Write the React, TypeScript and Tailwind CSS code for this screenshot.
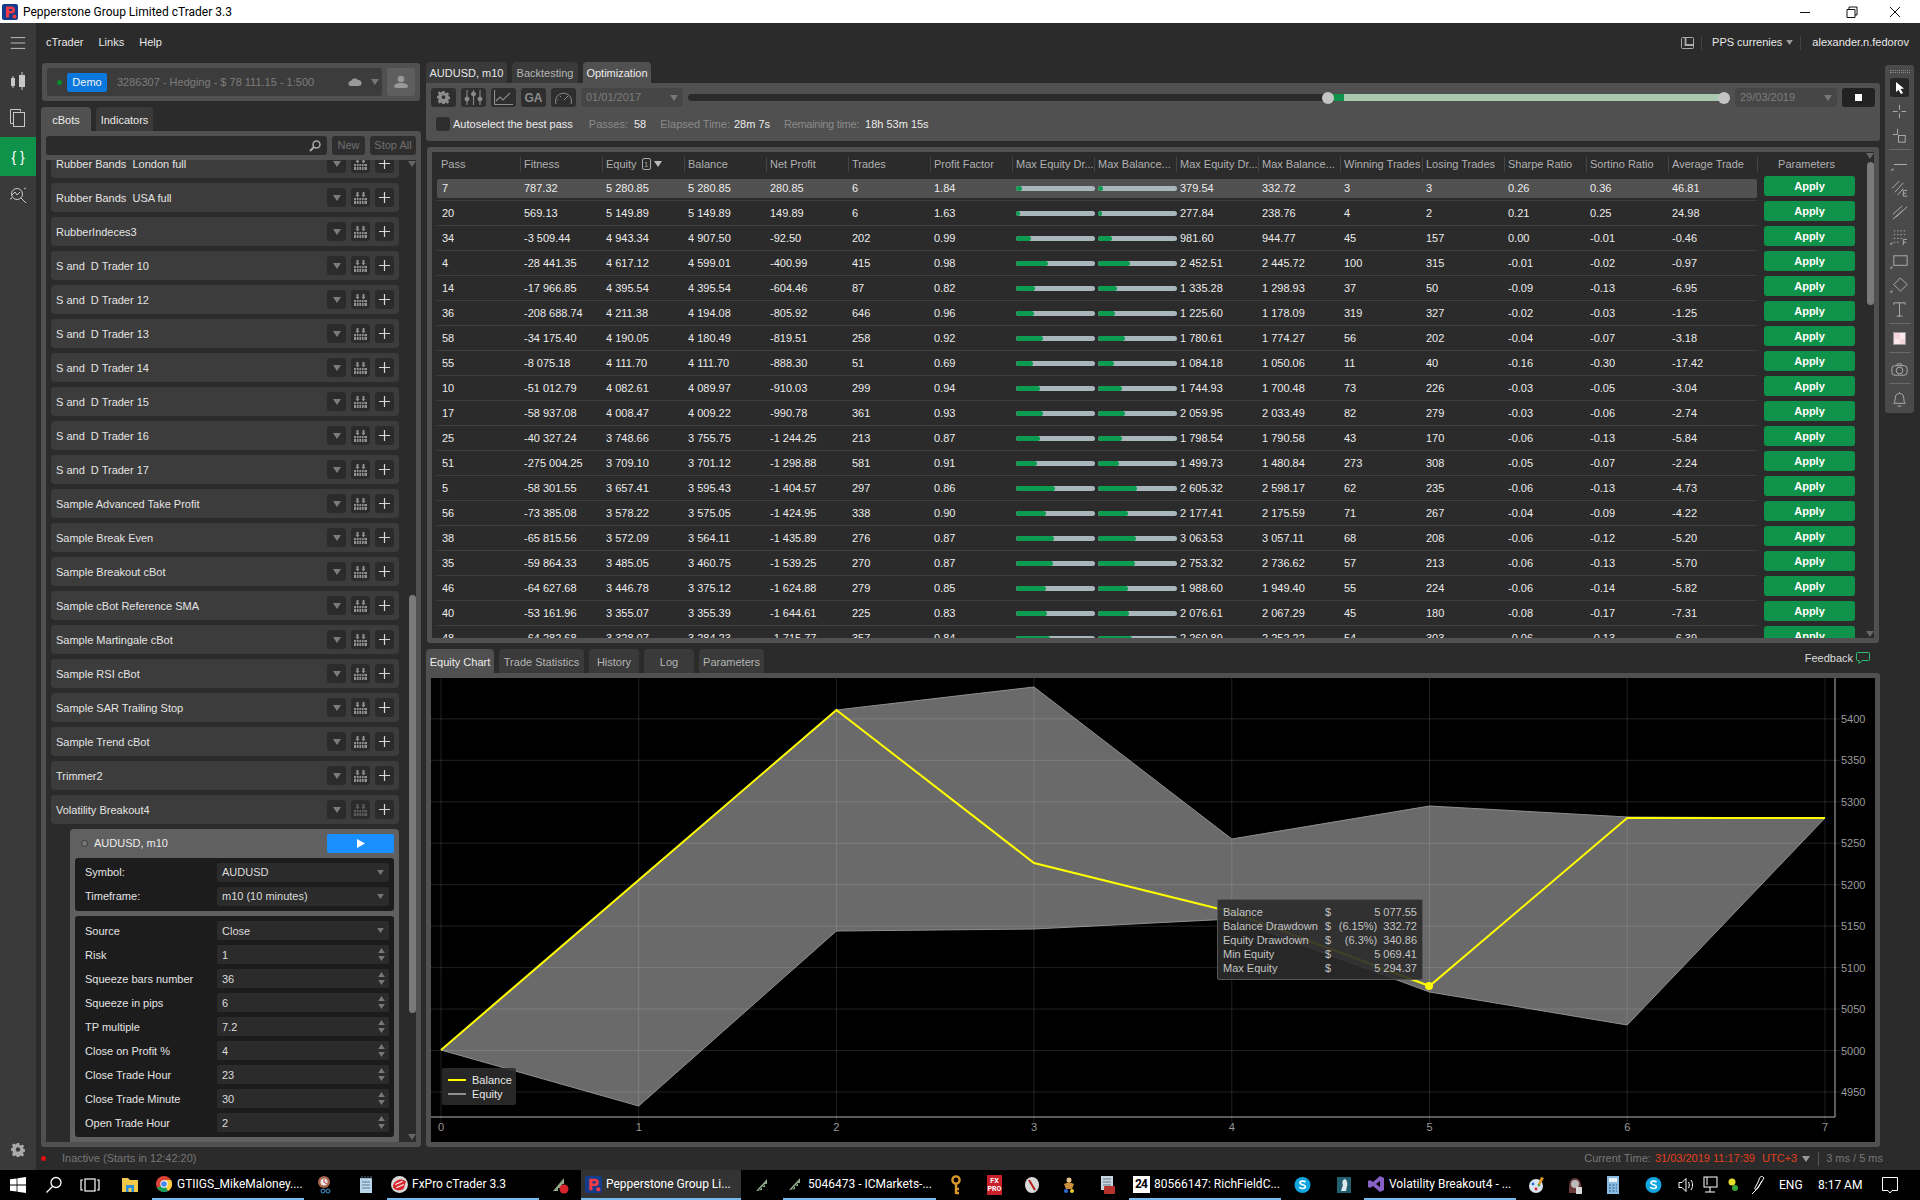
import type { ReactNode } from "react";

const bots = [
  "Rubber Bands  London full",
  "Rubber Bands  USA full",
  "RubberIndeces3",
  "S and  D Trader 10",
  "S and  D Trader 12",
  "S and  D Trader 13",
  "S and  D Trader 14",
  "S and  D Trader 15",
  "S and  D Trader 16",
  "S and  D Trader 17",
  "Sample Advanced Take Profit",
  "Sample Break Even",
  "Sample Breakout cBot",
  "Sample cBot Reference SMA",
  "Sample Martingale cBot",
  "Sample RSI cBot",
  "Sample SAR Trailing Stop",
  "Sample Trend cBot",
  "Trimmer2",
  "Volatility Breakout4",
];

const params: [string, string][] = [
  ["Risk", "1"],
  ["Squeeze bars number", "36"],
  ["Squeeze in pips", "6"],
  ["TP multiple", "7.2"],
  ["Close on Profit %", "4"],
  ["Close Trade Hour", "23"],
  ["Close Trade Minute", "30"],
  ["Open Trade Hour", "2"],
];

const headers = ["Pass", "Fitness", "Equity", "Balance", "Net Profit", "Trades", "Profit Factor", "Max Equity Dr...", "Max Balance...", "Max Equity Dr...", "Max Balance...", "Winning Trades", "Losing Trades", "Sharpe Ratio", "Sortino Ratio", "Average Trade"];

// pass, fitness, equity, balance, net, trades, pf, bar1 %, bar2 %, eq dd, bal dd, win, lose, sharpe, sortino, avg
const rows: (string | number)[][] = [
  ["7", "787.32", "5 280.85", "5 280.85", "280.85", "6", "1.84", 7.6, 6, "379.54", "332.72", "3", "3", "0.26", "0.36", "46.81"],
  ["20", "569.13", "5 149.89", "5 149.89", "149.89", "6", "1.63", 5, 4.5, "277.84", "238.76", "4", "2", "0.21", "0.25", "24.98"],
  ["34", "-3 509.44", "4 943.34", "4 907.50", "-92.50", "202", "0.99", 19, 17.5, "981.60", "944.77", "45", "157", "0.00", "-0.01", "-0.46"],
  ["4", "-28 441.35", "4 617.12", "4 599.01", "-400.99", "415", "0.98", 40.5, 40, "2 452.51", "2 445.72", "100", "315", "-0.01", "-0.02", "-0.97"],
  ["14", "-17 966.85", "4 395.54", "4 395.54", "-604.46", "87", "0.82", 24, 24, "1 335.28", "1 298.93", "37", "50", "-0.09", "-0.13", "-6.95"],
  ["36", "-208 688.74", "4 211.38", "4 194.08", "-805.92", "646", "0.96", 23, 22, "1 225.60", "1 178.09", "319", "327", "-0.02", "-0.03", "-1.25"],
  ["58", "-34 175.40", "4 190.05", "4 180.49", "-819.51", "258", "0.92", 34, 34, "1 780.61", "1 774.27", "56", "202", "-0.04", "-0.07", "-3.18"],
  ["55", "-8 075.18", "4 111.70", "4 111.70", "-888.30", "51", "0.69", 21, 20, "1 084.18", "1 050.06", "11", "40", "-0.16", "-0.30", "-17.42"],
  ["10", "-51 012.79", "4 082.61", "4 089.97", "-910.03", "299", "0.94", 30, 30, "1 744.93", "1 700.48", "73", "226", "-0.03", "-0.05", "-3.04"],
  ["17", "-58 937.08", "4 008.47", "4 009.22", "-990.78", "361", "0.93", 34, 34, "2 059.95", "2 033.49", "82", "279", "-0.03", "-0.06", "-2.74"],
  ["25", "-40 327.24", "3 748.66", "3 755.75", "-1 244.25", "213", "0.87", 31, 31, "1 798.54", "1 790.58", "43", "170", "-0.06", "-0.13", "-5.84"],
  ["51", "-275 004.25", "3 709.10", "3 701.12", "-1 298.88", "581", "0.91", 27, 27, "1 499.73", "1 480.84", "273", "308", "-0.05", "-0.07", "-2.24"],
  ["5", "-58 301.55", "3 657.41", "3 595.43", "-1 404.57", "297", "0.86", 49, 49, "2 605.32", "2 598.17", "62", "235", "-0.06", "-0.13", "-4.73"],
  ["56", "-73 385.08", "3 578.22", "3 575.05", "-1 424.95", "338", "0.90", 38, 38, "2 177.41", "2 175.59", "71", "267", "-0.04", "-0.09", "-4.22"],
  ["38", "-65 815.56", "3 572.09", "3 564.11", "-1 435.89", "276", "0.87", 48, 48, "3 063.53", "3 057.11", "68", "208", "-0.06", "-0.12", "-5.20"],
  ["35", "-59 864.33", "3 485.05", "3 460.75", "-1 539.25", "270", "0.87", 47, 47, "2 753.32", "2 736.62", "57", "213", "-0.06", "-0.13", "-5.70"],
  ["46", "-64 627.68", "3 446.78", "3 375.12", "-1 624.88", "279", "0.85", 38, 38, "1 988.60", "1 949.40", "55", "224", "-0.06", "-0.14", "-5.82"],
  ["40", "-53 161.96", "3 355.07", "3 355.39", "-1 644.61", "225", "0.83", 39, 39, "2 076.61", "2 067.29", "45", "180", "-0.08", "-0.17", "-7.31"],
  ["48", "-64 282.68", "3 328.07", "3 284.23", "-1 715.77", "357", "0.84", 43, 43, "2 260.89", "2 252.22", "54", "303", "-0.06", "-0.13", "-6.39"],
];

function Svg({ size = 20, className, children }: { size?: number; className?: string; children: ReactNode }) {
  return (
    <svg width={size} height={size} viewBox="0 0 20 20" fill="none" stroke="currentColor" strokeWidth="1" className={className}>
      {children}
    </svg>
  );
}

function Caret({ className = "text-[#8a8a8a]", size = 6, up = false }: { className?: string; size?: number; up?: boolean }) {
  return (
    <svg width={size + 2} height={size} viewBox="0 0 8 6" className={className}>
      <polygon points={up ? "0,6 8,6 4,0" : "0,0 8,0 4,6"} fill="currentColor" />
    </svg>
  );
}

function Spinner() {
  return (
    <div className="flex flex-col gap-[3px]">
      <Caret up size={5} className="text-[#777]" />
      <Caret size={5} className="text-[#777]" />
    </div>
  );
}

function BotIcon({ dim }: { dim?: boolean }) {
  return (
    <svg width="13" height="12" viewBox="0 0 13 12" className={dim ? "text-[#5e5e5e]" : "text-[#8f8f8f]"}>
      <g fill="currentColor">
        <rect x="0" y="6" width="13" height="6" />
        <rect x="2.5" y="0" width="2" height="3" />
        <polygon points="1.5,3 5.5,3 3.5,5.5" />
        <rect x="8.5" y="0" width="2" height="3" />
        <polygon points="7.5,3 11.5,3 9.5,5.5" />
      </g>
      <g stroke="#2b2b2b" strokeWidth="0.8">
        <path d="M2.5 6v6M5 6v6M7.5 6v6M10 6v6M0 8.5h13" />
      </g>
    </svg>
  );
}

function BotRow({ name, dim }: { name: string; dim?: boolean }) {
  return (
    <div className="flex h-[29px] shrink-0 items-center rounded-[4px] bg-[#3c3c3c] pl-[5px] pr-[5px]">
      <span className="flex-1 whitespace-pre pt-[1px] text-[#e4e4e4]">{name}</span>
      <div className="flex gap-[5px]">
        <div className="flex h-[19px] w-[19px] items-center justify-center rounded-[3px] bg-[#2b2b2b]">
          <Caret className="text-[#7c7c7c]" />
        </div>
        <div className="flex h-[19px] w-[19px] items-center justify-center rounded-[3px] bg-[#2b2b2b]">
          <BotIcon dim={dim} />
        </div>
        <div className="flex h-[19px] w-[19px] items-center justify-center rounded-[3px] bg-[#2b2b2b]">
          <svg width="13" height="13" viewBox="0 0 13 13" stroke="#d8d8d8" strokeWidth="1.2">
            <path d="M6.5 1v11M1 6.5h11" />
          </svg>
        </div>
      </div>
    </div>
  );
}

function ParamRow({ label, value, select, low }: { label: string; value: string; select?: boolean; low?: boolean }) {
  return (
    <div className="flex h-[19px] items-center">
      <span className={`w-[132px] text-[#e4e4e4] ${low ? "pt-[2px]" : ""}`}>{label}</span>
      <div className="flex h-[19px] w-[172px] items-center justify-between rounded-[2px] bg-[#2b2b2b] pl-[5px] pr-[4px] text-[#dcdcdc]">
        <span className={low ? "pt-[1px]" : ""}>{value}</span>
        {select ? <Caret size={5} className="mr-[1px] text-[#777]" /> : <Spinner />}
      </div>
    </div>
  );
}

function ToolBtn({ children }: { children: ReactNode }) {
  return <div className="flex h-[19px] w-[25px] items-center justify-center rounded-[3px] bg-[#2e2e2e] text-[#8c8c8c]">{children}</div>;
}

function Tab({ label, active, w, bright }: { label: string; active?: boolean; w: string; bright?: boolean }) {
  return (
    <div className={`flex items-center justify-center rounded-t-[4px] pt-[2px] ${w} ${active ? "bg-[#505050] text-[#ededed]" : bright ? "bg-[#3a3a3a] text-[#e6e6e6]" : "bg-[#3a3a3a] text-[#b4b4b4]"}`}>
      {label}
    </div>
  );
}

function Bar({ pct }: { pct: number }) {
  return (
    <div className="h-[5px] w-[79px] overflow-hidden rounded-full bg-[#a9b7bd]">
      <div className="h-full rounded-full bg-[#0b9c50]" style={{ width: `${pct}%` }} />
    </div>
  );
}

function TableRow({ row, selected }: { row: (string | number)[]; selected: boolean }) {
  return (
    <div className="flex h-[25px] shrink-0 items-start">
      <div className="ml-[5px] flex h-[25px] w-[1320px] items-center border-b border-[#3f3f3f]">
        <div className={`grid h-[19px] w-[1320px] grid-cols-[83px_repeat(15,82px)] items-center rounded-[2px] ${selected ? "bg-[#505050]" : ""}`}>
          {row.map((c, i) =>
            typeof c === "number" ? (
              <div key={i} className="pl-[4px]">
                <Bar pct={c} />
              </div>
            ) : (
              <span key={i} className={`whitespace-pre text-[#ececec] ${i === 0 ? "pl-[5px]" : "pl-[4px]"}`}>
                {c}
              </span>
            ),
          )}
        </div>
      </div>
      <div className="ml-[7px] flex h-[20px] w-[91px] items-center justify-center rounded-[3px] bg-[#0f924a] font-bold text-white">Apply</div>
    </div>
  );
}

function DrawTools() {
  return (
    <div className="mt-[3px] flex h-[348px] w-[29px] flex-col items-center rounded-[3px] bg-[#4a4a4a] text-[#b0b0b0]">
      <div className="mt-[5px] h-[3px] w-[20px] border-y border-dotted border-[#8a8a8a]" />
      <div className="mt-[5px] flex h-[19px] w-[19px] items-center justify-center rounded-[3px] bg-[#262626]">
        <svg width="12" height="14" viewBox="0 0 12 14">
          <path d="M2 1l8 6.5-3.5.5 2.5 4-2 1-2.5-4L2 11z" fill="#fff" />
        </svg>
      </div>
      <Svg className="mt-[5px]" size={19}>
        <path d="M10 3v5M10 12v5M3 10h5M12 10h5" />
      </Svg>
      <Svg className="mt-[5px]" size={19}>
        <path d="M8 3v6M3 9h5" />
        <rect x="9" y="10" width="7" height="7" />
      </Svg>
      <div className="mt-[4px] h-[1px] w-[22px] bg-[#6a6a6a]" />
      <Svg className="mt-[5px]" size={19}>
        <path d="M4 10h14" />
        <path d="M2 17v-2h2" />
      </Svg>
      <Svg className="mt-[5px]" size={19}>
        <path d="M2 10l8-8M5 14l9-10M8 17l6-7" />
        <path d="M14 12h4M14 15h3M14 18h4M14 12v6" />
      </Svg>
      <Svg className="mt-[5px]" size={19}>
        <path d="M3 12l10-9M6 15l12-11M3 17l10-9" />
      </Svg>
      <Svg className="mt-[6px]" size={19}>
        <path d="M4 3h14M4 7h14M4 11h9M4 15h7" strokeDasharray="1.5 2" />
        <path d="M14 12h4M14 12v6M14 15h3" />
        <path d="M1 18v-2h2" />
      </Svg>
      <Svg className="mt-[5px]" size={19}>
        <rect x="4" y="4" width="14" height="10" />
        <path d="M1 18v-2h2" />
      </Svg>
      <Svg className="mt-[5px]" size={19}>
        <path d="M11 2l7 7-7 7-7-7z" />
        <path d="M1 18v-2h2" />
      </Svg>
      <Svg className="mt-[5px]" size={19}>
        <path d="M4 5V3h12v2M10 3v14M7 17h6" />
      </Svg>
      <div className="mt-[4px] h-[1px] w-[22px] bg-[#6a6a6a]" />
      <div className="mt-[8px] grid h-[13px] w-[13px] grid-cols-2 border border-[#999]">
        <div className="bg-[#f5d5dd]" />
        <div className="bg-[#fbe9ed]" />
        <div className="bg-[#fbe9ed]" />
        <div className="bg-[#f5d5dd]" />
      </div>
      <div className="mt-[7px] h-[1px] w-[22px] bg-[#6a6a6a]" />
      <Svg className="mt-[7px]" size={19}>
        <rect x="2" y="6" width="16" height="10" rx="3" />
        <circle cx="10" cy="11" r="3.5" />
        <path d="M7 6l1-2h4l1 2" />
      </Svg>
      <div className="mt-[4px] h-[1px] w-[22px] bg-[#6a6a6a]" />
      <Svg className="mt-[6px]" size={19}>
        <path d="M4 14c2-2 1-5 2-8 1-3 7-3 8 0 1 3 0 6 2 8zM8 17h4M10 2v1" />
      </Svg>
    </div>
  );
}

function Chart() {
  const xs = [441, 638.7, 836.4, 1034, 1231.8, 1429.5, 1627.2, 1825];
  const levels = [5400, 5350, 5300, 5250, 5200, 5150, 5100, 5050, 5000, 4950];
  const yOf = (v: number) => 1050.5 - (v - 5000) * 0.829;
  const area = "441,1050 836.4,710 1034,687 1231.8,839 1429.5,806 1627.2,817 1825,818 1627.2,1025 1429.5,992 1231.8,919 1034,929 836.4,931 638.7,1106";
  const balance = "441,1050 836.4,710 1034,863 1231.8,912 1429.5,986 1627.2,818 1825,818";
  return (
    <div className="relative h-[464px] w-[1444px] bg-black">
      <svg width="1444" height="464" viewBox="431 678 1444 464" className="block">
        <polygon points={area} fill="#6a6a6a" stroke="#8f8f8f" strokeWidth="1" />
        {xs.map((x) => (
          <line key={x} x1={x} x2={x} y1="678" y2="1122" stroke="#fff" strokeOpacity="0.13" />
        ))}
        {levels.map((v) => (
          <line key={v} x1="431" x2="1840" y1={yOf(v)} y2={yOf(v)} stroke="#fff" strokeOpacity="0.13" />
        ))}
        <polyline points={balance} fill="none" stroke="#ffff00" strokeWidth="2" />
        <circle cx="1429" cy="986" r="4" fill="#ffff00" />
        <line x1="431" x2="1835" y1="1117" y2="1117" stroke="#b5b5b5" />
        <line x1="1835" x2="1835" y1="678" y2="1117" stroke="#b5b5b5" />
        {levels.map((v) => (
          <text key={v} x="1841" y={yOf(v) + 4} fontSize="11" fontFamily="Liberation Sans" fill="#9a9a9a">
            {v}
          </text>
        ))}
        {xs.map((x, i) => (
          <text key={x} x={x} y="1131" textAnchor="middle" fontSize="11" fontFamily="Liberation Sans" fill="#9a9a9a">
            {i}
          </text>
        ))}
      </svg>
      <div className="absolute left-[11px] top-[390px] h-[37px] w-[74px] rounded-[2px] bg-[#2b2b2b]/90 pt-[5px] text-[#e8e8e8]">
        <div className="flex h-[14px] items-center">
          <div className="ml-[6px] mr-[6px] h-[2px] w-[18px] bg-[#ffff00]" />
          Balance
        </div>
        <div className="flex h-[14px] items-center">
          <div className="ml-[6px] mr-[6px] h-[2px] w-[18px] bg-[#8f8f8f]" />
          Equity
        </div>
      </div>
      <div className="absolute left-[786px] top-[221px] h-[81px] w-[206px] rounded-[2px] border border-[#555] bg-[#2b2b2b]/90 px-[5px] pt-[5px] text-[#c4c4c4]">
        {[
          ["Balance", "5 077.55"],
          ["Balance Drawdown", "(6.15%)  332.72"],
          ["Equity Drawdown", "(6.3%)  340.86"],
          ["Min Equity", "5 069.41"],
          ["Max Equity", "5 294.37"],
        ].map(([k, v]) => (
          <div key={k} className="flex h-[14px] items-center">
            <span className="w-[102px]">{k}</span>
            <span>$</span>
            <span className="flex-1 whitespace-pre text-right">{v}</span>
          </div>
        ))}
      </div>
    </div>
  );
}

function TaskTab({ w, icon, label, active }: { w: string; icon: ReactNode; label: string; active?: boolean }) {
  return (
    <div className={`flex h-[30px] shrink-0 items-center gap-[3px] border-b-2 border-[#76b9ed] pl-[2px] ${w} ${active ? "bg-[#333]" : ""}`}>
      <div className="flex w-[20px] justify-center">{icon}</div>
      <span className="whitespace-pre text-[12px] text-white">{label}</span>
    </div>
  );
}

function Slot({ w, children }: { w: string; children: ReactNode }) {
  return <div className={`flex h-[30px] shrink-0 items-center justify-center ${w}`}>{children}</div>;
}

const PepperIcon = ({ s = 16 }: { s?: number }) => (
  <svg width={s} height={s} viewBox="0 0 16 16">
    <rect width="16" height="16" rx="2" fill="#143c8c" />
    <path d="M4 2.5h5.5a3.5 3.5 0 010 7H7v4H4z" fill="#f03a47" />
    <path d="M7 5h2.3a1 1 0 010 2H7z" fill="#143c8c" />
    <circle cx="12.5" cy="12.5" r="2" fill="#f03a47" />
  </svg>
);
const FxProIcon = () => (
  <svg width="17" height="17" viewBox="0 0 16 16">
    <circle cx="8" cy="8" r="8" fill="#d8d8d8" />
    <path d="M2 8c3-5 8-6 12-3l-2 7c-3 2-7 2-10-1z" fill="#d8252c" />
    <path d="M4 8l7-3M5 11l7-3" stroke="#fff" strokeWidth="1" />
  </svg>
);
const SpotIcon = () => (
  <svg width="16" height="16" viewBox="0 0 16 16">
    <path d="M2 14L13 2v5h-2v3H8v3z" fill="#8fa889" />
    <path d="M5 13l6-6" stroke="#2c4a2c" />
  </svg>
);
const SkypeIcon = () => (
  <svg width="17" height="18" viewBox="0 0 17 18">
    <circle cx="8.5" cy="9" r="8" fill="#11a5e0" />
    <path d="M11.5 6.2c-1-1.5-5.5-1.6-5.6.6-.1 2.4 5.6 1.3 5.5 3.9-.1 2.2-5 2.3-6.1.4" fill="none" stroke="#fff" strokeWidth="1.6" />
  </svg>
);

function Taskbar() {
  return (
    <div className="flex h-[30px] shrink-0 items-center bg-black font-['Roboto',sans-serif]">
      <Slot w="w-[36px]">
        <svg width="16" height="16" viewBox="0 0 16 16" fill="#fff">
          <path d="M0 2.3L6.6 1.4V7.6H0zM7.4 1.3L16 0V7.6H7.4zM0 8.4H6.6V14.6L0 13.7zM7.4 8.4H16V16L7.4 14.7z" />
        </svg>
      </Slot>
      <Slot w="w-[36px]">
        <svg width="18" height="18" viewBox="0 0 18 18" fill="none" stroke="#fff" strokeWidth="1.3">
          <circle cx="11" cy="6.5" r="5" />
          <path d="M7.5 10.5L1.5 16.5" />
        </svg>
      </Slot>
      <Slot w="w-[36px]">
        <svg width="20" height="14" viewBox="0 0 20 14" fill="none" stroke="#fff" strokeWidth="1.2">
          <rect x="5" y="1" width="10" height="12" />
          <path d="M3 2H1v10h2M17 2h2v10h-2" />
        </svg>
      </Slot>
      <Slot w="w-[44px]">
        <svg width="18" height="16" viewBox="0 0 18 16">
          <path d="M1 1h6l2 2h8v12H1z" fill="#f2c84b" />
          <rect x="5" y="8" width="8" height="7" fill="#2a8fd8" />
          <rect x="7.5" y="11" width="3" height="4" fill="#f2c84b" />
        </svg>
      </Slot>
      <TaskTab
        w="w-[152px]"
        label="GTIIGS_MikeMaloney...."
        icon={
          <svg width="16" height="16" viewBox="0 0 16 16">
            <circle cx="8" cy="8" r="8" fill="#db4437" />
            <path d="M8 8L1 12a8 8 0 0011 3z" fill="#0f9d58" />
            <path d="M8 8l4 7a8 8 0 003-11H8z" fill="#ffcd40" />
            <circle cx="8" cy="8" r="3.7" fill="#fff" />
            <circle cx="8" cy="8" r="2.8" fill="#4285f4" />
          </svg>
        }
      />
      <Slot w="w-[41px]">
        <svg width="17" height="18" viewBox="0 0 17 18">
          <circle cx="8" cy="6" r="6" fill="#a6654a" />
          <circle cx="8" cy="6" r="3.5" fill="#e8e8e8" />
          <path d="M8 3v3l3 2" stroke="#b33" fill="none" />
          <circle cx="7" cy="15" r="2" fill="none" stroke="#3b9bd8" />
          <circle cx="12" cy="15" r="2" fill="none" stroke="#3b9bd8" />
        </svg>
      </Slot>
      <Slot w="w-[42px]">
        <svg width="15" height="18" viewBox="0 0 15 18">
          <rect x="1" y="2" width="12" height="15" fill="#b9d6ea" />
          <path d="M3 6h8M3 9h8M3 12h8M3 0v3M6 0v3M9 0v3M12 0v3" stroke="#5c7a90" />
        </svg>
      </Slot>
      <TaskTab w="w-[152px]" label="FxPro cTrader 3.3" icon={<FxProIcon />} />
      <Slot w="w-[42px]">
        <svg width="18" height="18" viewBox="0 0 18 18">
          <path d="M2 15L13 2v6h-2v4H7v3z" fill="#8fa889" />
          <circle cx="13" cy="13" r="4.5" fill="#d8252c" />
        </svg>
      </Slot>
      <TaskTab w="w-[160px]" label="Pepperstone Group Li..." icon={<PepperIcon s={17} />} active />
      <Slot w="w-[42px]">
        <SpotIcon />
      </Slot>
      <TaskTab w="w-[153px]" label="5046473 - ICMarkets-..." icon={<SpotIcon />} />
      <Slot w="w-[40px]">
        <svg width="12" height="20" viewBox="0 0 12 20" fill="none" stroke="#d99a2b" strokeWidth="2.4">
          <circle cx="6" cy="5" r="3.6" />
          <path d="M6 9v10M6 14h3M6 18h3" />
        </svg>
      </Slot>
      <Slot w="w-[37px]">
        <div className="flex h-[20px] w-[15px] flex-col items-center justify-center bg-[#c8202a] text-[7px] font-bold leading-[8px] text-white">
          <span>FX</span>
          <span>PRO</span>
        </div>
      </Slot>
      <Slot w="w-[37px]">
        <svg width="16" height="18" viewBox="0 0 16 18">
          <ellipse cx="8" cy="9" rx="7" ry="8" fill="#d9d9d9" />
          <path d="M5 4l6 10" stroke="#b31c1c" strokeWidth="2" />
        </svg>
      </Slot>
      <Slot w="w-[37px]">
        <svg width="16" height="18" viewBox="0 0 16 18">
          <circle cx="8" cy="4" r="2.5" fill="#e6c18e" />
          <path d="M3 8l5-2 5 2-2 5H5z" fill="#c98f3a" />
          <circle cx="5" cy="15" r="2" fill="#2a6cd8" />
          <circle cx="11" cy="15" r="2" fill="#e8c92a" />
        </svg>
      </Slot>
      <Slot w="w-[42px]">
        <svg width="16" height="20" viewBox="0 0 16 20">
          <rect x="1" y="1" width="12" height="14" fill="#c8d4de" />
          <path d="M3 4h8M3 7h8M3 10h8" stroke="#66788a" />
          <rect x="4" y="11" width="11" height="8" rx="1" fill="#b6322c" />
        </svg>
      </Slot>
      <TaskTab
        w="w-[152px]"
        label="80566147: RichFieldC..."
        icon={<div className="flex h-[17px] w-[17px] items-center justify-center bg-white text-[12px] font-bold leading-none tracking-[-1px] text-black">24</div>}
      />
      <Slot w="w-[42px]">
        <SkypeIcon />
      </Slot>
      <Slot w="w-[41px]">
        <svg width="16" height="18" viewBox="0 0 16 18">
          <rect x="1" y="1" width="14" height="16" fill="#23606f" />
          <path d="M9 3c-3 1-3 4-2 6l-2 6h5l1-5c1-2 0-6-2-7z" fill="#dfe8ea" />
        </svg>
      </Slot>
      <TaskTab
        w="w-[152px]"
        label="Volatility Breakout4 - ..."
        icon={
          <svg width="17" height="18" viewBox="0 0 17 18">
            <path d="M12 1l4 2v12l-4 2-7-6-3 2-2-1V6l2-1 3 2zM12 6L8 9l4 3z" fill="#8661c5" fillRule="evenodd" />
          </svg>
        }
      />
      <Slot w="w-[41px]">
        <svg width="18" height="18" viewBox="0 0 18 18">
          <circle cx="8" cy="10" r="7" fill="#d8e4ee" />
          <circle cx="5" cy="8" r="1.4" fill="#2a6cd8" />
          <circle cx="8" cy="13" r="1.4" fill="#d8252c" />
          <circle cx="11" cy="9" r="1.4" fill="#3a9d3a" />
          <path d="M13 1l3 1-4 7-2-1z" fill="#d99a2b" />
        </svg>
      </Slot>
      <Slot w="w-[36px]">
        <svg width="16" height="20" viewBox="0 0 16 20">
          <path d="M2 10a6 7 0 0112 0v8H2z" fill="#6a3a3a" />
          <circle cx="8" cy="9" r="4" fill="#bbb" />
          <rect x="9" y="12" width="6" height="7" fill="#d8d8d8" />
        </svg>
      </Slot>
      <Slot w="w-[39px]">
        <svg width="14" height="20" viewBox="0 0 14 20">
          <rect x="1" y="1" width="12" height="18" fill="#8bbbe0" />
          <rect x="3" y="3" width="8" height="4" fill="#e8f2fa" />
          <path d="M3 10h2M6.500 10h2M10 10h1M3 13h2M6.500 13h2M10 13h1M3 16h2M6.500 16h2M10 16h1" stroke="#2a5a88" />
        </svg>
      </Slot>
      <Slot w="w-[42px]">
        <SkypeIcon />
      </Slot>
      <Slot w="w-[24px]">
        <svg width="17" height="16" viewBox="0 0 17 16" fill="none" stroke="#fff">
          <path d="M1 5.500h3l4-4v13l-4-4H1zM10.500 5c1 2 1 4 0 6M13 3c2 3 2 7 0 10" />
        </svg>
      </Slot>
      <Slot w="w-[24px]">
        <svg width="17" height="18" viewBox="0 0 17 18" fill="none" stroke="#fff">
          <rect x="2" y="1" width="13" height="10" />
          <path d="M8 11v5M3 16h10M5 1v8" />
        </svg>
      </Slot>
      <Slot w="w-[22px]">
        <svg width="12" height="14" viewBox="0 0 12 14">
          <circle cx="5" cy="4" r="3.500" fill="#e6e02a" />
          <circle cx="8" cy="10" r="3" fill="#3aa53a" />
        </svg>
      </Slot>
      <Slot w="w-[28px]">
        <svg width="16" height="20" viewBox="0 0 16 20" fill="none" stroke="#fff">
          <path d="M2 19l4-4 8-12c-2-3-5-1-5 2L5 13c-1 2 2 2 3 0l4-7" />
        </svg>
      </Slot>
      <span className="ml-[7px] w-[39px] text-[12px] text-white">ENG</span>
      <span className="w-[58px] text-[12px] text-white">8:17 AM</span>
      <Slot w="w-[28px]">
        <svg width="16" height="17" viewBox="0 0 16 17" fill="none" stroke="#fff">
          <path d="M.500.500h15v13H10l-2 2.500-2-2.500H.500z" />
        </svg>
      </Slot>
    </div>
  );
}

export default function App() {
  return (
    <div className="flex h-[1200px] w-[1920px] flex-col overflow-hidden bg-[#2b2b2b] font-['Liberation_Sans',Arial,sans-serif] text-[11px] leading-none">
      {/* title bar */}
      <div className="flex h-[23px] shrink-0 items-center bg-white pl-[2px] font-['Roboto',sans-serif] text-[12px] text-black">
        <PepperIcon />
        <span className="ml-[5px] flex-1">Pepperstone Group Limited cTrader 3.3</span>
        <svg width="120" height="12" viewBox="0 0 120 12" fill="none" stroke="#111">
          <path d="M0 6.500h10M47 3.500h8v8h-8zM49 3.500v-2.500h8v8h-2M90 1l10 10M100 1l-10 10" />
        </svg>
      </div>

      <div className="flex min-h-0 flex-1">
        {/* far left rail */}
        <div className="flex w-[36px] shrink-0 flex-col items-center bg-[#3a3a3a] text-[#c8c8c8]">
          <div className="flex h-[39px] w-full items-center justify-center">
            <Svg size={18}>
              <path d="M2 4h16M2 10h16M2 16h16" />
            </Svg>
          </div>
          <div className="flex h-[37px] w-full items-center justify-center">
            <svg width="16" height="18" viewBox="0 0 16 18" fill="currentColor">
              <rect x="1" y="6" width="4" height="8" />
              <rect x="2.500" y="4" width="1" height="12" />
              <rect x="9" y="3" width="6" height="12" />
              <rect x="11.500" y="0" width="1" height="18" />
            </svg>
          </div>
          <div className="flex h-[38px] w-full items-center justify-center">
            <svg width="16" height="18" viewBox="0 0 16 18" fill="none" stroke="currentColor">
              <path d="M3.500 14.500H.500V.500h10v2" />
              <rect x="3.500" y="3.500" width="11" height="14" />
            </svg>
          </div>
          <div className="flex h-[39px] w-full items-center justify-center bg-[#0f9249] text-[14px] text-white">{"{ }"}</div>
          <div className="flex h-[37px] w-full items-center justify-center">
            <svg width="18" height="18" viewBox="0 0 18 18" fill="none" stroke="currentColor">
              <circle cx="8" cy="8" r="5.500" />
              <path d="M3 9l3-3 2 3 3-3M12 12l5 5M1 13l2-1M15 3l2-1" />
            </svg>
          </div>
          <div className="mt-auto mb-[13px] text-[#aaa]">
            <svg width="14" height="14" viewBox="0 0 14 14" fill="currentColor">
              <path d="M5.800 0h2.400l.3 1.900 1.300.6L11.400 1.400l1.700 1.700-1.100 1.600.6 1.300 1.900.3v2.400l-1.900.3-.6 1.300 1.100 1.600-1.700 1.700-1.600-1.100-1.300.6-.3 1.900H5.800l-.3-1.900-1.300-.6-1.600 1.100L.9 10.900 2 9.300l-.6-1.300L-.5 7.700V5.300l1.900-.3.6-1.300L.9 2.100 2.600.4l1.600 1.100 1.300-.6z" />
              <circle cx="7" cy="6.500" r="2.200" fill="#3a3a3a" />
            </svg>
          </div>
        </div>

        <div className="flex min-w-0 flex-1 flex-col">
          {/* menu bar */}
          <div className="flex h-[39px] shrink-0 items-center pl-[10px] text-[#e8e8e8]">
            <span>cTrader</span>
            <span className="ml-[15px]">Links</span>
            <span className="ml-[15px]">Help</span>
            <svg width="13" height="12" viewBox="0 0 13 12" fill="none" stroke="#aaa" className="ml-auto">
              <rect x=".5" y=".5" width="12" height="11" rx="1" />
              <path d="M4.500.5v7.500h8" strokeWidth="1.800" />
            </svg>
            <div className="ml-[7px] h-[14px] w-[1px] bg-[#444]" />
            <span className="ml-[10px]">PPS currenies</span>
            <Caret size={5} className="ml-[4px] text-[#999]" />
            <div className="ml-[7px] h-[14px] w-[1px] bg-[#444]" />
            <span className="ml-[11px] mr-[11px]">alexander.n.fedorov</span>
          </div>

          <div className="flex min-h-0 flex-1">
            {/* left column */}
            <div className="flex w-[390px] shrink-0 flex-col pl-[5px] pr-[5px]">
              <div className="ml-[1px] mr-[1px] mt-[1px] flex h-[38px] shrink-0 items-center gap-[5px] rounded-[3px] bg-[#505050] px-[5px]">
                <div className="flex h-[28px] flex-1 items-center rounded-[3px] bg-[#3c3c3c] pl-[10px] pr-[3px]">
                  <div className="h-[5px] w-[5px] rounded-full bg-[#0a8a2a]" />
                  <div className="ml-[5px] flex h-[19px] w-[40px] items-center justify-center rounded-[2px] bg-[#0a78dc] text-[#f4f4f4]">Demo</div>
                  <span className="ml-[10px] flex-1 text-[#7d7d7d]">3286307 - Hedging - $ 78 111.15 - 1:500</span>
                  <svg width="14" height="8" viewBox="0 0 14 8" fill="#999">
                    <path d="M3 8a2.500 2.500 0 010-5 4 4 0 017-1 3 3 0 011 6z" />
                  </svg>
                  <Caret className="ml-[9px] text-[#777]" />
                </div>
                <div className="flex h-[28px] w-[28px] items-center justify-center rounded-[3px] bg-[#5e5e5e]">
                  <svg width="14" height="14" viewBox="0 0 14 14" fill="#999">
                    <circle cx="7" cy="4" r="3.300" />
                    <path d="M0 12c0-3 3-4 7-4s7 1 7 4c0 1.500-14 1.500-14 0z" />
                  </svg>
                </div>
              </div>

              <div className="mt-[6px] flex h-[24px] shrink-0 gap-[5px]">
                <Tab label="cBots" active w="w-[50px]" />
                <Tab label="Indicators" bright w="w-[57px]" />
              </div>

              <div className="flex min-h-0 flex-1 flex-col rounded-b-[3px] rounded-tr-[3px] bg-[#505050] p-[5px]">
                <div className="flex h-[19px] shrink-0 gap-[5px]">
                  <div className="flex flex-1 items-center justify-end rounded-[3px] bg-[#2b2b2b] pr-[6px]">
                    <svg width="12" height="12" viewBox="0 0 12 12" fill="none" stroke="#aaa" strokeWidth="1.500">
                      <circle cx="7.500" cy="4.500" r="3.500" />
                      <path d="M5 7L1 11" strokeWidth="2" />
                    </svg>
                  </div>
                  <div className="flex w-[33px] items-center justify-center rounded-[3px] bg-[#2e2e2e] text-[#6e6e6e]">New</div>
                  <div className="flex w-[46px] items-center justify-center rounded-[3px] bg-[#2e2e2e] text-[#6e6e6e]">Stop All</div>
                </div>
                <div className="mt-[5px] flex min-h-0 flex-1 overflow-hidden bg-[#2b2b2b] pl-[5px]">
                  <div className="flex w-[348px] shrink-0 flex-col">
                    <div className="-mt-[11px] flex flex-col gap-[5px]">
                      {bots.map((b) => (
                        <BotRow key={b} name={b} dim={b.startsWith("Volatility")} />
                      ))}
                    </div>
                    {/* instance */}
                    <div className="mt-[5px] flex shrink-0 flex-col rounded-t-[4px] bg-[#606060] pb-[5px] pl-[5px] pr-[5px] ml-[19px]">
                      <div className="flex h-[29px] items-center">
                        <div className="ml-[6px] h-[7px] w-[7px] rounded-full border border-[#3a3a3a] bg-[#777]" />
                        <span className="ml-[6px] flex-1 text-[#ececec]">AUDUSD, m10</span>
                        <div className="flex h-[19px] w-[67px] items-center justify-center rounded-[2px] bg-[#1a90ff]">
                          <svg width="8" height="9" viewBox="0 0 8 9" fill="#fff">
                            <path d="M0 0l8 4.500L0 9z" />
                          </svg>
                        </div>
                      </div>
                      <div className="flex flex-col gap-[5px] rounded-[3px] bg-[#1c1c1c] py-[5px] pl-[10px] pr-[5px]">
                        <ParamRow label="Symbol:" value="AUDUSD" select />
                        <ParamRow label="Timeframe:" value="m10 (10 minutes)" select />
                      </div>
                      <div className="mt-[5px] flex flex-col gap-[5px] rounded-[3px] bg-[#1c1c1c] py-[5px] pl-[10px] pr-[5px]">
                        <ParamRow label="Source" value="Close" select low />
                        {params.map(([k, v]) => (
                          <ParamRow key={k} label={k} value={v} low />
                        ))}
                      </div>
                    </div>
                  </div>
                  <div className="ml-[6px] flex w-[11px] shrink-0 flex-col items-end pr-0 pt-[1px]">
                    <Caret className="mr-[0px] text-[#666]" />
                    <div className="mt-[428px] h-[418px] w-[7px] rounded-full bg-[#7a7a7a]" />
                    <Caret className="mt-auto mb-[2px] text-[#666]" />
                  </div>
                </div>
              </div>
            </div>

            {/* right area */}
            <div className="flex w-[1454px] shrink-0 flex-col">
              <div className="flex h-[21px] shrink-0 gap-[5px]">
                <Tab label="AUDUSD, m10" bright w="w-[81px]" />
                <Tab label="Backtesting" w="w-[66px]" />
                <Tab label="Optimization" active w="w-[68px]" />
              </div>
              <div className="flex h-[58px] shrink-0 flex-col rounded-b-[3px] rounded-tr-[3px] bg-[#505050] px-[5px] pt-[5px]">
                <div className="flex h-[19px] items-center gap-[5px]">
                  <ToolBtn>
                    <svg width="13" height="13" viewBox="0 0 14 14" fill="currentColor">
                      <path d="M5.800 0h2.400l.3 1.900 1.300.6L11.400 1.400l1.700 1.700-1.100 1.600.6 1.300 1.900.3v2.400l-1.900.3-.6 1.300 1.100 1.600-1.700 1.700-1.600-1.100-1.300.6-.3 1.900H5.800l-.3-1.900-1.300-.6-1.600 1.100L.9 10.900 2 9.300l-.6-1.300L-.5 7.700V5.300l1.900-.3.6-1.300L.9 2.100 2.600.4l1.600 1.100 1.300-.6z" />
                      <circle cx="7" cy="6.500" r="2" fill="#2e2e2e" />
                    </svg>
                  </ToolBtn>
                  <ToolBtn>
                    <svg width="19" height="15" viewBox="0 0 19 15" stroke="#8c8c8c" fill="#8c8c8c">
                      <path d="M3 0v15M9.500 0v15M16 0v15" />
                      <circle cx="3" cy="9" r="2" />
                      <circle cx="9.500" cy="4" r="2" />
                      <circle cx="16" cy="9" r="2" />
                    </svg>
                  </ToolBtn>
                  <ToolBtn>
                    <svg width="19" height="15" viewBox="0 0 19 15" fill="none" stroke="#8c8c8c">
                      <path d="M.5 0v14.500H19M2 11l4-4 3 3 7-7" strokeWidth="1.200" />
                    </svg>
                  </ToolBtn>
                  <ToolBtn>
                    <span className="text-[12px] font-bold">GA</span>
                  </ToolBtn>
                  <ToolBtn>
                    <svg width="19" height="14" viewBox="0 0 19 14" fill="none" stroke="#8c8c8c">
                      <path d="M2 13a8 8 0 1115 0M10 9l4-4M6 5l1 1M3 9l1 .5" />
                    </svg>
                  </ToolBtn>
                  <div className="flex h-[19px] w-[102px] items-center justify-between rounded-[3px] bg-[#464646] pl-[5px] pr-[5px] text-[#7d7d7d]">
                    01/01/2017
                    <Caret className="text-[#777]" />
                  </div>
                  <div className="flex w-[1042px] items-center">
                    <div className="h-[7px] w-[639px] rounded-l-full bg-[#2b2b2b]" />
                    <div className="relative -mx-[5px] h-[12px] w-[12px] rounded-full bg-[#c4c4c4]" />
                    <div className="h-[7px] w-[15px] bg-[#0f9249]" />
                    <div className="h-[7px] w-[379px] bg-[#a8c8b0]" />
                    <div className="-ml-[5px] h-[12px] w-[12px] rounded-full bg-[#c4c4c4]" />
                  </div>
                  <div className="flex h-[19px] w-[102px] items-center justify-between rounded-[3px] bg-[#464646] pl-[5px] pr-[5px] text-[#7d7d7d]">
                    29/03/2019
                    <Caret className="text-[#777]" />
                  </div>
                  <div className="flex h-[19px] w-[33px] items-center justify-center rounded-[3px] bg-[#222]">
                    <div className="h-[7px] w-[7px] bg-white" />
                  </div>
                </div>
                <div className="ml-[5px] mt-[10px] flex h-[14px] items-center">
                  <div className="h-[14px] w-[14px] rounded-[3px] bg-[#2e2e2e]" />
                  <span className="ml-[3px] text-[#ececec]">Autoselect the best pass</span>
                  <span className="ml-[16px] text-[#8a8a8a]">Passes:</span>
                  <span className="ml-[6px] text-[#ececec]">58</span>
                  <span className="ml-[14px] text-[#8a8a8a]">Elapsed Time:</span>
                  <span className="ml-[4px] text-[#ececec]">28m 7s</span>
                  <span className="ml-[14px] tracking-[-0.3px] text-[#8a8a8a]">Remaining time:</span>
                  <span className="ml-[6px] text-[#ececec]">18h 53m 15s</span>
                </div>
              </div>

              {/* results table */}
              <div className="ml-[1px] mr-[1px] mt-[6px] flex h-[496px] w-[1452px] shrink-0 rounded-[3px] bg-[#505050] p-[5px]">
                <div className="flex min-w-0 flex-1 flex-col overflow-hidden bg-[#2b2b2b]">
                  <div className="ml-[5px] flex h-[24px] shrink-0 items-center">
                    <div className="grid w-[1320px] grid-cols-[83px_repeat(15,82px)] items-center text-[#b0b0b0]">
                      {headers.map((h, i) => (
                        <div key={i} className={`flex h-[15px] items-center whitespace-pre ${i === 0 ? "pl-[4px]" : "border-l border-[#454545] pl-[3px]"}`}>
                          {h}
                          {h === "Equity" && (
                            <>
                              <span className="ml-[5px] flex h-[12px] w-[9px] items-center justify-center rounded-[2px] border border-[#aaa] text-[7px]">1</span>
                              <Caret className="ml-[3px] text-[#bbb]" />
                            </>
                          )}
                        </div>
                      ))}
                    </div>
                    <div className="flex h-[15px] w-[98px] items-center justify-center border-l border-[#454545] text-[#b0b0b0]">Parameters</div>
                  </div>
                  {rows.map((r, i) => (
                    <TableRow key={i} row={r} selected={i === 0} />
                  ))}
                </div>
                <div className="flex w-[12px] shrink-0 flex-col items-end bg-[#2b2b2b] pt-[1px]">
                  <Caret className="text-[#666]" />
                  <div className="mt-[3px] h-[143px] w-[7px] rounded-full bg-[#7a7a7a]" />
                  <Caret className="mt-auto mb-[1px] text-[#666]" />
                </div>
              </div>

              {/* bottom tabs + chart */}
              <div className="mt-[6px] flex h-[24px] shrink-0 items-stretch gap-[5px]">
                <Tab label="Equity Chart" active w="w-[68px]" />
                <Tab label="Trade Statistics" w="w-[85px]" />
                <Tab label="History" w="w-[50px]" />
                <Tab label="Log" w="w-[50px]" />
                <Tab label="Parameters" w="w-[65px]" />
                <div className="ml-auto mr-[10px] mt-[3px] flex items-center gap-[3px] self-start text-[#dcdcdc]">
                  Feedback
                  <svg width="14" height="12" viewBox="0 0 14 12" fill="none" stroke="#2fbf71">
                    <path d="M1.500.5h11a1 1 0 011 1v6a1 1 0 01-1 1H6l-3 3v-3H1.500a1 1 0 01-1-1v-6a1 1 0 011-1z" />
                  </svg>
                </div>
              </div>
              <div className="flex min-h-0 flex-1 rounded-b-[3px] rounded-tr-[3px] bg-[#505050] p-[5px]">
                <Chart />
              </div>
            </div>

            {/* drawing tools */}
            <div className="ml-[5px] w-[29px] shrink-0">
              <DrawTools />
            </div>
          </div>

          {/* status bar */}
          <div className="flex h-[23px] shrink-0 items-center text-[#777]">
            <div className="ml-[5px] h-[5px] w-[5px] rounded-full bg-[#e01010]" />
            <span className="ml-[16px]">Inactive (Starts in 12:42:20)</span>
            <span className="ml-auto">Current Time:</span>
            <span className="ml-[4px] text-[#e2401c]">31/03/2019 11:17:39</span>
            <span className="ml-[7px] text-[#e2401c]">UTC+3</span>
            <Caret className="ml-[5px] text-[#999]" />
            <div className="ml-[8px] h-[14px] w-[1px] bg-[#555]" />
            <span className="ml-[7px] mr-[37px]">3 ms / 5 ms</span>
          </div>
        </div>
      </div>

      <Taskbar />
    </div>
  );
}
